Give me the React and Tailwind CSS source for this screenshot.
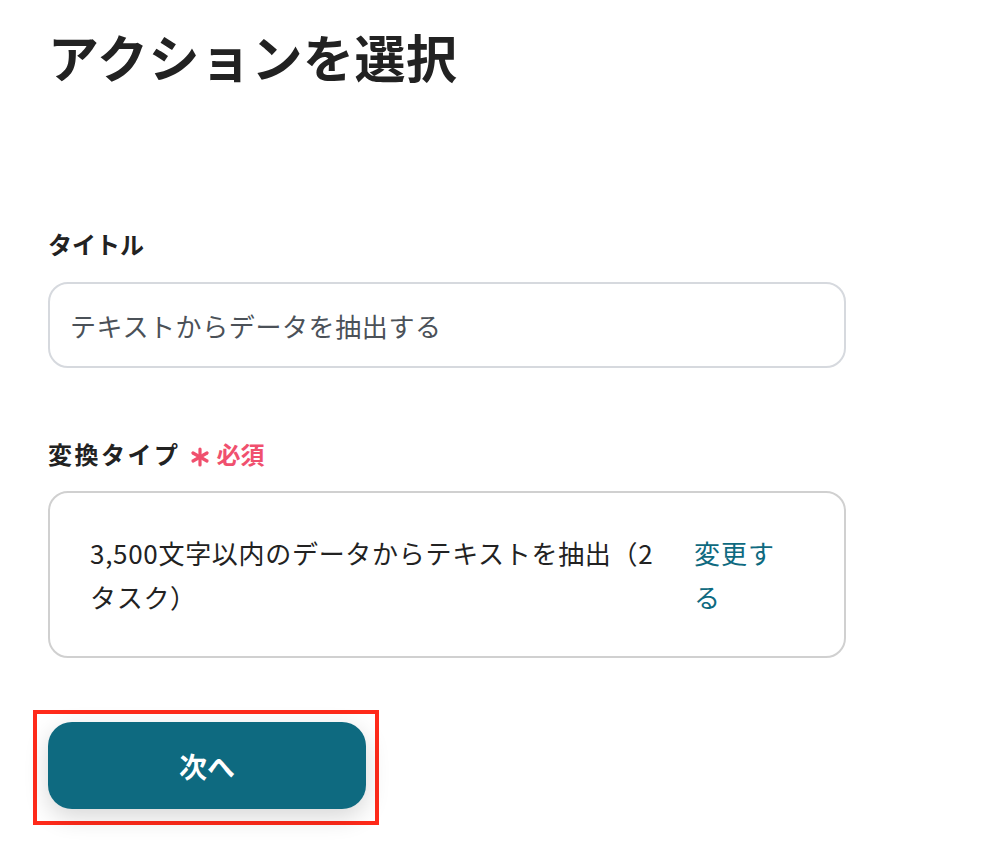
export default function App() {
  return (
    <div
      className="min-h-screen bg-white pl-[48px] pt-[20px]"
      style={{ fontFamily: '"Noto Sans CJK JP", "Noto Sans", sans-serif' }}
    >
      <h1 className="text-[51px] leading-[72px] font-bold tracking-[0.5px] text-[#222222]">
        アクションを選択
      </h1>

      <div className="w-[798px] mt-[136px]">
        <label className="block text-[24px] leading-[32px] font-bold text-[#222222]">タイトル</label>
        <div className="mt-[22px] h-[86px] rounded-[20px] border-2 border-[#d6d9de] flex items-center px-[20px]">
          <span className="text-[26px] tracking-[0.6px] text-[#4b5158]">テキストからデータを抽出する</span>
        </div>

        <div className="mt-[70px] flex items-center">
          <label className="text-[24px] leading-[32px] font-bold tracking-[2.5px] text-[#222222]">変換タイプ</label>
          <svg className="ml-[9px] mt-[6px]" width="20" height="20" viewBox="0 0 20 20">
            <g stroke="#f0506e" strokeWidth="3.2" strokeLinecap="round">
              <line x1="10" y1="2" x2="10" y2="18" />
              <line x1="3" y1="6" x2="17" y2="14" />
              <line x1="3" y1="14" x2="17" y2="6" />
            </g>
          </svg>
          <span className="ml-[7px] text-[24px] leading-[32px] font-bold text-[#f0506e]">必須</span>
        </div>
        <div className="mt-[21px] h-[167px] rounded-[20px] border-2 border-[#d0d0d0] flex items-center pl-[40px] pr-[64px] gap-[24px]">
          <p className="flex-1 text-[26px] leading-[44px] tracking-[0.7px] text-[#222222]">
            3,500文字以内のデータからテキストを抽出（2タスク）
          </p>
          <a className="w-[86px] shrink-0 text-[26px] leading-[44px] tracking-[1px] text-[#0e6a80]">変更する</a>
        </div>
      </div>

      <div className="mt-[52px] ml-[-15px] inline-block border-4 border-[#ff2a1a] pt-[8px] pb-[12px] pl-[11px] pr-[9px]">
        <button className="w-[318px] h-[87px] rounded-[24px] bg-[#0e6a80] text-white text-[28px] font-bold shadow-[0_8px_24px_rgba(0,0,0,0.16)]">
          次へ
        </button>
      </div>
    </div>
  );
}
